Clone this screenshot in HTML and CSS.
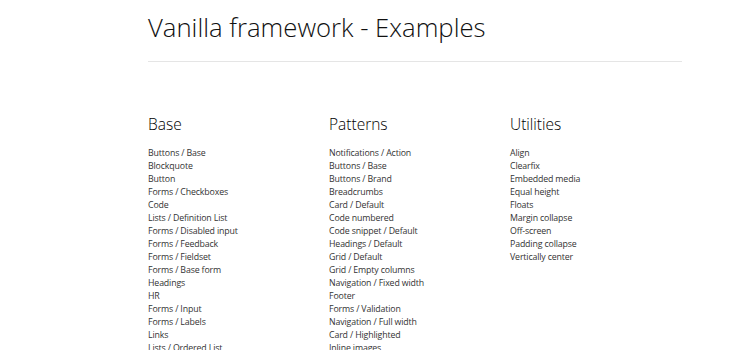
FILE: index.html
```html
<!DOCTYPE html>
<html lang="en">
<head>
    <meta charset="UTF-8">
    <meta name="viewport" content="width=device-width, initial-scale=1.0">
    <title>Vanilla framework - Examples</title>
    <link rel="stylesheet" href="styles.css">
</head>
<body>
    <div class="wrapper">
        <h1 class="page-title">Vanilla framework - Examples</h1>
        <hr class="divider">

        <div class="columns">
            <div class="column">
                <h3 class="column-title">Base</h3>
                <ul class="example-list">
                    <li><a href="#">Buttons / Base</a></li>
                    <li><a href="#">Blockquote</a></li>
                    <li><a href="#">Button</a></li>
                    <li><a href="#">Forms / Checkboxes</a></li>
                    <li><a href="#">Code</a></li>
                    <li><a href="#">Lists / Definition List</a></li>
                    <li><a href="#">Forms / Disabled input</a></li>
                    <li><a href="#">Forms / Feedback</a></li>
                    <li><a href="#">Forms / Fieldset</a></li>
                    <li><a href="#">Forms / Base form</a></li>
                    <li><a href="#">Headings</a></li>
                    <li><a href="#">HR</a></li>
                    <li><a href="#">Forms / Input</a></li>
                    <li><a href="#">Forms / Labels</a></li>
                    <li><a href="#">Links</a></li>
                    <li><a href="#">Lists / Ordered List</a></li>
                </ul>
            </div>
            <div class="column">
                <h3 class="column-title">Patterns</h3>
                <ul class="example-list">
                    <li><a href="#">Notifications / Action</a></li>
                    <li><a href="#">Buttons / Base</a></li>
                    <li><a href="#">Buttons / Brand</a></li>
                    <li><a href="#">Breadcrumbs</a></li>
                    <li><a href="#">Card / Default</a></li>
                    <li><a href="#">Code numbered</a></li>
                    <li><a href="#">Code snippet / Default</a></li>
                    <li><a href="#">Headings / Default</a></li>
                    <li><a href="#">Grid / Default</a></li>
                    <li><a href="#">Grid / Empty columns</a></li>
                    <li><a href="#">Navigation / Fixed width</a></li>
                    <li><a href="#">Footer</a></li>
                    <li><a href="#">Forms / Validation</a></li>
                    <li><a href="#">Navigation / Full width</a></li>
                    <li><a href="#">Card / Highlighted</a></li>
                    <li><a href="#">Inline images</a></li>
                </ul>
            </div>
            <div class="column">
                <h3 class="column-title">Utilities</h3>
                <ul class="example-list">
                    <li><a href="#">Align</a></li>
                    <li><a href="#">Clearfix</a></li>
                    <li><a href="#">Embedded media</a></li>
                    <li><a href="#">Equal height</a></li>
                    <li><a href="#">Floats</a></li>
                    <li><a href="#">Margin collapse</a></li>
                    <li><a href="#">Off-screen</a></li>
                    <li><a href="#">Padding collapse</a></li>
                    <li><a href="#">Vertically center</a></li>
                </ul>
            </div>
        </div>
    </div>
</body>
</html>
```

FILE: styles.css
```css
/* Page */
body {
    margin: 0;
    background: #fff;
    color: #111;
    font-family: 'Open Sans', 'Noto Sans', sans-serif;
}

.wrapper {
    width: 534px;
    margin-left: 148px;
    padding-top: 12px;
}

/* Title */
.page-title {
    margin: 0;
    font-size: 25.7px;
    font-weight: 300;
    line-height: 32px;
    color: #111;
}

.divider {
    margin: 17px 0 0;
    border: none;
    border-top: 1px solid #e5e5e5;
}

/* Columns */
.columns {
    display: grid;
    grid-template-columns: 181px 181px 1fr;
    margin-top: 51px;
}

.column-title {
    margin: 0 0 12px;
    font-size: 15.5px;
    font-weight: 300;
    line-height: 22px;
    color: #000;
}

.example-list {
    list-style: none;
    margin: 0;
    padding: 0;
}

.example-list li {
    font-size: 8.8px;
    line-height: 13px;
    letter-spacing: -0.15px;
}

.example-list a {
    color: #333;
    text-decoration: none;
}
```
